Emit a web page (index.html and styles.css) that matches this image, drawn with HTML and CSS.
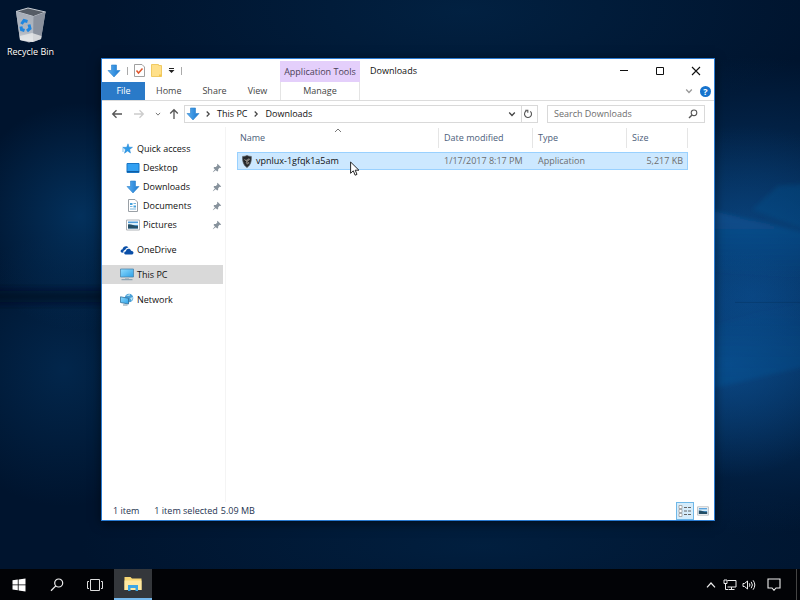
FILE: index.html
```html
<!DOCTYPE html>
<html lang="en">
<head>
<meta charset="utf-8">
<title>Downloads</title>
<link rel="stylesheet" href="styles.css">
</head>
<body>
<svg class="defs" width="0" height="0" aria-hidden="true">
  <defs>
    <linearGradient id="arrowFill" x1="0" x2="1"><stop offset="0" stop-color="#5aaef0"/><stop offset="1" stop-color="#1a78d0"/></linearGradient>
    <linearGradient id="screen" x1="0" y1="0" x2="1" y2="1"><stop offset="0" stop-color="#8fdcff"/><stop offset="1" stop-color="#2c9fe6"/></linearGradient>
    <linearGradient id="binFront" x1="0" y1="0" x2="0" y2="1"><stop offset="0" stop-color="#a6adb8"/><stop offset=".7" stop-color="#b3b9c2"/><stop offset="1" stop-color="#e4e6e8"/></linearGradient>
    <symbol id="down" viewBox="0 0 14 14"><path d="M4.500 1h5v5.500h3.500L7 13 1 6.500h3.500z" fill="url(#arrowFill)" stroke="#2a7fcb" stroke-width=".6"/></symbol>
    <symbol id="pin" viewBox="0 0 10 10"><path d="M5.500 .8 9.200 4.500 8.300 4.900 7.600 4.800 6.200 6.300 6.100 8 5.200 8.600 1.500 4.900 2.200 4 3.900 3.900 5.300 2.500 5.100 1.600zM3 6.200 3.900 7.100 1 9.300.8 9z" fill="#87929c"/></symbol>
    <symbol id="photo" viewBox="0 0 14 12"><path d="M.5 1h13v10H.5z" fill="#fff" stroke="#b0b4b8"/><path d="M2 2.500h10v7H2z" fill="#4f9ddb"/><path d="M2 4h10v2H2z" fill="#d8eefa"/><path d="M2 5.500c3-.8 5 1.500 10 1.500v2.500H2z" fill="#254f66"/></symbol>
    <symbol id="chev" viewBox="0 0 8 8"><path d="m1.200 2.500 2.800 3 2.800-3" fill="none" stroke="currentColor" stroke-width="1.300"/></symbol>
    <symbol id="chevR" viewBox="0 0 8 8"><path d="m2.700 1.500 2.500 2.500-2.500 2.500" fill="none" stroke="currentColor" stroke-width="1.200"/></symbol>
  </defs>
</svg>
<main class="desktop">
  <svg class="wallpaper" viewBox="0 0 800 570" preserveAspectRatio="none" aria-hidden="true">
    <defs>
      <linearGradient id="beamA" x1="0" y1="0" x2="0" y2="1"><stop offset="0" stop-color="#1260a8" stop-opacity=".45"/><stop offset="1" stop-color="#1260a8" stop-opacity="0"/></linearGradient>
      <linearGradient id="beamB" x1="0" y1="1" x2="0" y2="0"><stop offset="0" stop-color="#1260a8" stop-opacity=".3"/><stop offset="1" stop-color="#1260a8" stop-opacity="0"/></linearGradient>
      <filter id="thin" x="-50%" y="-50%" width="200%" height="200%"><feGaussianBlur stdDeviation="4"/></filter>
      <filter id="edge"><feGaussianBlur stdDeviation="2"/></filter>
    </defs>
    <g filter="url(#edge)">
      <path d="M700 208 810 234V280L700 270z" fill="url(#beamA)"/>
      <path d="M700 392 810 366V300L700 330z" fill="url(#beamB)"/>
      <path d="M752 210 778 186 810 184V232z" fill="#0f5596" opacity=".3"/>
    </g>
    <path d="M-10 291H110V303H-10z" fill="#000c20" opacity=".7" filter="url(#thin)"/>
    <path d="M735 303H810" stroke="#032a50" opacity=".3"/>
  </svg>

  <a class="desk-icon" href="#">
    <svg width="32" height="36" viewBox="0 0 32 36" aria-hidden="true">
      <path d="M1 4.500 5 33 14 35.500 26 32 30.500 5 19 9z" fill="#a8afba"/>
      <path d="M1 4.500 13 1 30.500 5 18.500 9.500z" fill="#555c66" stroke="#c9ced5"/>
      <path d="M1 4.500 18.500 9.500 18 35 5 33z" fill="url(#binFront)"/>
      <path d="M18.500 9.500 30.500 5 26 32 18 35z" fill="#8a919d"/>
      <path d="M5 29 17 26 26.500 29 26 32 18 35 5 33z" fill="#e6e7e8" opacity=".8"/>
      <g fill="none" stroke="#1f86df" stroke-width="3"><path d="m6.500 17 2.500-3.500 3.500 1"/><path d="m14 17.500 1 4-3 2.500"/><path d="m9.500 23.500-3-1-.5-3"/></g>
    </svg>
    <span>Recycle Bin</span>
  </a>

  <section class="window" aria-label="Downloads">
    <header class="ribbon">
      <div class="ribbon-left">
        <div class="quick">
          <svg width="14" height="14"><use href="#down"/></svg>
          <i class="bar"></i>
          <button aria-label="Properties"><svg width="11" height="13" viewBox="0 0 11 13"><path d="M.5.5h7.500l2.500 2.500v9.500H.5z" fill="#fff" stroke="#a0a0a0"/><path d="m2.500 6.500 2 2.500 4-4.500" fill="none" stroke="#e0562b" stroke-width="1.500"/></svg></button>
          <button aria-label="New folder"><svg width="11" height="13" viewBox="0 0 11 13"><path d="M.5.5h7v1h3v11H.5z" fill="#ffe08a" stroke="#f0ca63"/><path d="M8 10.500h2.500v2H8z" fill="#f5c64c"/></svg></button>
          <button aria-label="Customize Quick Access Toolbar"><svg width="7" height="7" viewBox="0 0 7 7"><path d="M1 1h5v1H1zM.5 3h6l-3 3z" fill="#222"/></svg></button>
          <i class="bar"></i>
        </div>
        <nav class="tabs">
          <button class="file">File</button><button>Home</button><button>Share</button><button>View</button>
        </nav>
      </div>
      <div class="context">
        <span>Application Tools</span>
        <button>Manage</button>
      </div>
      <div class="ribbon-right">
        <div class="titlebar">
          <h1>Downloads</h1>
          <div class="controls">
            <button aria-label="Minimize"><svg width="10" height="10"><path d="M1 4.500h8" stroke="#111"/></svg></button>
            <button aria-label="Maximize"><svg width="10" height="10"><path d="M1.500 1.500h7v7h-7z" fill="none" stroke="#111"/></svg></button>
            <button aria-label="Close"><svg width="10" height="10"><path d="m1 1 8 8M9 1 1 9" stroke="#111" stroke-width="1.100"/></svg></button>
          </div>
        </div>
        <div class="help">
          <button aria-label="Expand the Ribbon"><svg width="8" height="8"><use href="#chev"/></svg></button>
          <button class="q" aria-label="Help">?</button>
        </div>
      </div>
    </header>

    <div class="address">
      <div class="history">
        <button aria-label="Back"><svg width="12" height="10" viewBox="0 0 12 10"><path d="M11 5H2M5.500 1.200 1.700 5l3.800 3.800" fill="none" stroke="#555" stroke-width="1.300"/></svg></button>
        <button aria-label="Forward"><svg width="12" height="10" viewBox="0 0 12 10"><path d="M1 5h9M6.500 1.200 10.300 5 6.500 8.800" fill="none" stroke="#ccc" stroke-width="1.300"/></svg></button>
        <button class="recent" aria-label="Recent locations"><svg width="6" height="6"><use href="#chev"/></svg></button>
        <button aria-label="Up"><svg width="10" height="12" viewBox="0 0 10 12"><path d="M5 11V2M1.200 5.500 5 1.700l3.800 3.800" fill="none" stroke="#555" stroke-width="1.300"/></svg></button>
      </div>
      <div class="path">
        <svg width="14" height="14"><use href="#down"/></svg>
        <svg width="8" height="8"><use href="#chevR"/></svg>
        <a href="#">This PC</a>
        <svg width="8" height="8"><use href="#chevR"/></svg>
        <a href="#">Downloads</a>
        <button class="drop" aria-label="Previous locations"><svg width="8" height="8"><use href="#chev"/></svg></button>
        <button class="refresh" aria-label="Refresh"><svg width="10" height="10" viewBox="0 0 10 10"><path d="M7.300 2.300A3.500 3.500 0 1 1 3.500 1.800M2.300 1.200h2.500v2.600" fill="none" stroke="#555" stroke-width="1.100"/></svg></button>
      </div>
      <label class="search">
        <input type="text" placeholder="Search Downloads" aria-label="Search Downloads">
        <svg width="10" height="10" viewBox="0 0 10 10"><circle cx="6" cy="3.800" r="2.800" fill="none" stroke="#555" stroke-width="1.100"/><path d="M4 6 1 9" stroke="#555" stroke-width="1.400"/></svg>
      </label>
    </div>

    <div class="body">
      <nav class="tree">
        <ul>
          <li><a href="#"><svg width="14" height="12" viewBox="0 0 14 12"><path d="m8 .8 1 3.400 3.500.1-2.900 2.100.9 3.600-2.900-2-3.100 2.200 1-3.600L2.700 4.300h4z" fill="#2f9be8" stroke="#2185d4" stroke-width=".5"/><path d="M2 6h2.500M2 8h2" stroke="#7fc1f2"/></svg>Quick access</a></li>
          <li class="sub"><a href="#"><svg width="14" height="12" viewBox="0 0 14 12"><path d="M1 1.500h12v9H1z" fill="#32a0f2" stroke="#1976c5"/><path d="M1 9.500h12" stroke="#0e5da4"/></svg>Desktop</a><svg class="pin" width="10" height="10"><use href="#pin"/></svg></li>
          <li class="sub"><a href="#"><svg width="14" height="14"><use href="#down"/></svg>Downloads</a><svg class="pin" width="10" height="10"><use href="#pin"/></svg></li>
          <li class="sub"><a href="#"><svg width="14" height="13" viewBox="0 0 14 13"><path d="M2.500.5H9L11.500 3v9.500h-9z" fill="#fff" stroke="#9aa0a6"/><path d="M4 4h2.500v2H4zM7.500 6.500H10v2H7.500z" fill="#49a3dd"/><path d="M7.500 4.500H10M4 7.500h2.500M4 10h6" stroke="#78b6de"/></svg>Documents</a><svg class="pin" width="10" height="10"><use href="#pin"/></svg></li>
          <li class="sub"><a href="#"><svg width="14" height="12"><use href="#photo"/></svg>Pictures</a><svg class="pin" width="10" height="10"><use href="#pin"/></svg></li>
        </ul>
        <ul><li><a href="#"><svg width="14" height="12" viewBox="0 0 14 12"><path d="M1.500 8.500C0 8 .3 5.500 2.500 5.300 3 2.500 6.500 1 8.500 3.500 7 3.500 5.500 4.500 5.200 6 3.500 6 3 7.500 3.500 8.700z" fill="#0a4fa8"/><path d="M5.500 10.500C3.500 10 4 7.300 6 7.200 6.300 4.300 10.300 4 11 6.700c2.800.1 3.200 3 1.300 3.800z" fill="#0a4fa8"/></svg>OneDrive</a></li></ul>
        <ul><li class="selected"><a href="#"><svg width="14" height="13" viewBox="0 0 14 13"><path d="M.5 1h13v8H.5z" fill="url(#screen)" stroke="#4c87ad" stroke-width=".8"/><path d="M5 9.500h4v1.500H5z" fill="#aebac3"/><path d="M1.500 11.700h11" stroke="#7c97a8"/></svg>This PC</a></li></ul>
        <ul><li><a href="#"><svg width="14" height="13" viewBox="0 0 14 13"><circle cx="9" cy="5" r="4.300" fill="#4a9fd6"/><path d="M6 2.500 10 .9 9.500 3zM10 5l3-1-1 4z" fill="#bfe6f5"/><path d="M.5 3.800 8.500 5.300V11l-8-1.500z" fill="url(#screen)" stroke="#2f6f9a" stroke-width=".8"/><path d="M3 12h4.500" stroke="#7c97a8"/></svg>Network</a></li></ul>
      </nav>
      <div class="files">
        <table>
          <colgroup><col><col class="c-date"><col class="c-type"><col class="c-size"></colgroup>
          <thead><tr>
            <th><span>Name</span><svg class="sort" width="8" height="5" viewBox="0 0 8 5"><path d="m1 4 3-3 3 3" fill="none" stroke="#777"/></svg></th>
            <th><span>Date modified</span></th><th><span>Type</span></th><th><span>Size</span></th>
          </tr></thead>
          <tbody><tr>
            <td class="name"><div><svg width="12" height="13" viewBox="0 0 12 14"><path d="M6 .5c1.700.9 3 1 4.600 1 .3 5-.6 9-4.600 12C2 10.500 1 6.500 1.300 1.500 3 1.500 4.300 1.400 6 .5z" fill="#25282b" stroke="#55585a" stroke-width=".8"/><path d="m2.500 4 2.500 1.300L8 3.500l1.500 1-1.500 2 .5 2.500L6 10.500 4.700 8z" fill="#817d78"/><path d="m3 6 2 1.500M6.500 8l2-2" stroke="#111"/></svg>vpnlux-1gfqk1a5am</div></td>
            <td>1/17/2017 8:17 PM</td><td>Application</td><td class="num">5,217 KB</td>
          </tr></tbody>
        </table>
      </div>
    </div>

    <footer class="status">
      <span>1 item</span><span>1 item selected</span><span class="bytes">5.09 MB</span>
      <div class="views">
        <button class="on" aria-label="Details"><svg width="14" height="12" viewBox="0 0 14 12"><path d="M1 .5h3v3H1zM1 4.500h3v3H1zM1 8.500h3v3H1z" fill="#fff" stroke="#999" stroke-width=".8"/><path d="M6 2.500h3M10 2.500h3M6 6h3M10 6h3M6 9.500h3M10 9.500h3" stroke="#666"/></svg></button>
        <button aria-label="Large icons"><svg width="12" height="10"><use href="#photo"/></svg></button>
      </div>
    </footer>
  </section>

  <svg class="cursor" width="10" height="16" viewBox="0 0 10 16" aria-hidden="true"><path d="M.6 1v11.300l2.700-2.500 1.800 4.400 1.900-.8-1.800-4.200h3.700z" fill="#fff" stroke="#111" stroke-width=".9"/></svg>
</main>

<footer class="taskbar">
  <button aria-label="Start"><svg width="14" height="14" viewBox="0 0 14 14"><path d="M.5 2.300 5.800 1.500v5H.5zM6.600 1.400 13.500.4v6.100H6.600zM.5 7.300h5.300v5L.5 11.500zM6.600 7.300h6.900v6.200l-6.900-1z" fill="#fff"/></svg></button>
  <button aria-label="Search"><svg width="14" height="14" viewBox="0 0 14 14"><circle cx="8.700" cy="5" r="4" fill="none" stroke="#eee" stroke-width="1.200"/><path d="M5.800 7.900 1 12.700" stroke="#eee" stroke-width="1.300"/></svg></button>
  <button aria-label="Task view"><svg width="18" height="14" viewBox="0 0 18 14"><path d="M4.500 1.500h9v11h-9zM3 3.500H1.500v7H3M15 3.500h1.500v7H15" fill="none" stroke="#ddd"/></svg></button>
  <button class="active" aria-label="File Explorer"><svg width="18" height="16" viewBox="0 0 18 16"><path d="M.5 1h6l1.500 1.500h9.500V14H.5z" fill="#f7d774"/><path d="M.5 4.500h17V14H.5z" fill="#ffe9a2"/><path d="M4 9h10v6h-2.500v-3h-5v3H4z" fill="#3ba7e6"/></svg></button>
  <div class="tray">
    <button aria-label="Show hidden icons"><svg width="10" height="8" viewBox="0 0 10 8"><path d="m1 6.300 4-4.300 4 4.300" fill="none" stroke="#eee" stroke-width="1.200"/></svg></button>
    <button aria-label="Network"><svg width="14" height="12" viewBox="0 0 14 12"><path d="M4.500 1.500h8.500v6.500H4.500M8.500 8v2.500M5.500 10.500h6M1 1h3v3.500H1zM2.500 4.500v6H5" fill="none" stroke="#eee"/></svg></button>
    <button aria-label="Volume"><svg width="14" height="12" viewBox="0 0 14 12"><path d="M1 4.500h1.500L5.500 2v8L2.500 7.500H1zM7.300 4.300q1.300 1.700 0 3.400M9.200 2.800q2.400 3.200 0 6.400M11.100 1.300q3.400 4.700 0 9.400" fill="none" stroke="#eee"/></svg></button>
    <button class="action" aria-label="Action center"><svg width="14" height="13" viewBox="0 0 14 13"><path d="M1 1h12v9H9l-2 2.300L5 10H1z" fill="none" stroke="#eee" stroke-width="1.100"/></svg></button>
  </div>
</footer>
</body>
</html>
```
FILE: styles.css
```css
* { box-sizing: border-box; }
body {
  margin: 0;
  height: 100vh;
  display: flex;
  flex-direction: column;
  overflow: hidden;
  font: 9px/12px "Open Sans", "Noto Sans", sans-serif;
  color: #111;
}
button, input {
  font: inherit;
  color: inherit;
  background: none;
  border: 0;
  padding: 0;
  margin: 0;
}
a { color: inherit; text-decoration: none; }
svg { flex: none; display: block; }
ul { list-style: none; margin: 0; padding: 0; }
.defs { position: absolute; }

.desktop {
  flex: 1;
  position: relative;
  overflow: hidden;
  background:
    radial-gradient(ellipse 16% 20% at 91% 64%, rgba(14, 84, 152, .6), transparent),
    radial-gradient(ellipse 18% 18% at 93% 40%, rgba(12, 76, 138, .55), transparent),
    radial-gradient(ellipse 34% 42% at 94% 52%, #07407a, transparent),
    radial-gradient(ellipse 14% 20% at 10% 38%, rgba(4, 56, 104, .8), transparent),
    radial-gradient(ellipse 16% 24% at 8% 65%, rgba(3, 46, 88, .7), transparent),
    radial-gradient(ellipse 45% 22% at 58% 2%, rgba(2, 36, 70, .8), transparent),
    radial-gradient(ellipse 50% 14% at 60% 96%, rgba(2, 38, 74, .6), transparent),
    #00142e;
}
.wallpaper { position: absolute; inset: 0; width: 100%; height: 100%; }

.desk-icon {
  position: absolute;
  left: 0;
  top: 7px;
  width: 61px;
  display: flex;
  flex-direction: column;
  align-items: center;
  gap: 3px;
  color: #fff;
  text-shadow: 0 1px 2px #000;
}

.window {
  position: absolute;
  inset: 58px 85px 48px 101px;
  display: flex;
  flex-direction: column;
  background: #fff;
  border: 1px solid #2b7cd3;
  box-shadow: 0 2px 10px rgba(0, 0, 0, .5);
}

.ribbon { display: flex; height: 42px; border-bottom: 1px solid #dcdcdc; }
.ribbon-left { width: 178px; }
.quick { display: flex; align-items: center; gap: 6px; height: 23px; padding-left: 5px; }
.bar { width: 1px; height: 8px; background: #aaa; }
.tabs { display: flex; gap: 1px; height: 18px; color: #444; }
.tabs button { padding: 0 10px; }
.tabs .file { width: 43px; background: #2a7ac8; color: #fff; }
.context { width: 80px; display: flex; flex-direction: column; padding-top: 2px; text-align: center; white-space: nowrap; }
.context span { height: 21px; line-height: 21px; background: #e4cffb; color: #4b4158; display: flex; justify-content: center; }
.context button { height: 18px; border: solid #e4e4e4; border-width: 0 1px; color: #444; }
.ribbon-right { flex: 1; }
.titlebar { display: flex; height: 23px; padding-left: 10px; align-items: center; }
.titlebar h1 { margin: 0; font: inherit; flex: 1; }
.controls { display: flex; }
.controls button { width: 36px; height: 22px; display: grid; place-items: center; }
.help { display: flex; align-items: center; justify-content: flex-end; gap: 7px; height: 18px; padding-right: 3px; color: #999; }
.help .q { width: 11px; height: 11px; line-height: 11px; border-radius: 50%; background: #1673cd; color: #fff; font-weight: 700; }

.address { display: flex; align-items: center; height: 26px; padding: 0 9px; }
.history { display: flex; align-items: center; gap: 10px; width: 73px; color: #777; }
.history .recent { margin-right: -2px; }
.path { flex: 1; display: flex; align-items: center; height: 18px; border: 1px solid #d9d9d9; color: #444; }
.path a { margin: 0 5px; color: #111; }
.path svg:first-child { margin: 0 4px 0 1px; }
.drop { margin-left: auto; width: 16px; height: 16px; display: grid; place-items: center; }
.refresh { width: 16px; height: 16px; border-left: 1px solid #d9d9d9; display: grid; place-items: center; }
.search { display: flex; align-items: center; width: 158px; height: 18px; margin-left: 9px; padding: 0 6px; border: 1px solid #d9d9d9; }
.search input { flex: 1; min-width: 0; outline: 0; }
.search input::placeholder { color: #6d6d6d; opacity: 1; }

.body { flex: 1; display: flex; min-height: 0; }
.tree { width: 124px; padding-top: 12px; border-right: 1px solid #f4f4f4; }
.tree ul + ul { margin-top: 6px; }
.tree li { display: flex; align-items: center; justify-content: space-between; height: 19px; margin-right: 2px; padding-left: 18px; }
.tree li.sub { padding-left: 24px; }
.tree a { display: flex; align-items: center; gap: 3px; }
.tree .selected { background: #d9d9d9; }
.pin { margin-right: 1px; }

.files { flex: 1; padding: 1px 26px 0 11px; }
table { width: 100%; border-collapse: separate; border-spacing: 0; table-layout: fixed; }
.c-date, .c-type { width: 94px; }
.c-size { width: 61px; }
th { position: relative; padding: 0 0 4px; font-weight: 400; text-align: left; color: #4c607a; }
th span { display: block; height: 20px; line-height: 20px; padding-left: 5px; border-right: 1px solid #e5e5e5; }
th:first-child span { padding-left: 3px; }
.sort { position: absolute; top: 0; left: 50%; margin-left: -4px; }
td { height: 18px; padding: 0 5px; background: #cce8ff; border: solid #99d1ff; border-width: 1px 0; color: #6d6d6d; white-space: nowrap; }
td:first-child { border-left-width: 1px; }
td:last-child { border-right-width: 1px; }
.name { padding-left: 3px; color: #111; }
.name div { display: flex; align-items: center; gap: 3px; }
td.num { text-align: right; padding-right: 4px; }

.status { display: flex; align-items: center; gap: 15px; height: 18px; padding-left: 11px; color: #1e3350; }
.status .bytes { margin-left: -12px; }
.views { margin-left: auto; display: flex; align-items: center; gap: 3px; padding-right: 5px; }
.views button { display: grid; place-items: center; height: 18px; }
.views .on { width: 18px; background: #d5ecfb; border: 1px solid #6fb8e8; }

.cursor { position: absolute; left: 350px; top: 161px; }

.taskbar { display: flex; height: 31px; background: #020306; }
.taskbar button { width: 38px; display: grid; place-items: center; }
.taskbar .active { background: #34373b; border-bottom: 2px solid #76b9ed; }
.tray { margin-left: auto; display: flex; padding-right: 6px; border-right: 1px solid #444; margin-right: 3px; }
.tray button { width: 19px; }
.tray .action { width: 32px; }
```
